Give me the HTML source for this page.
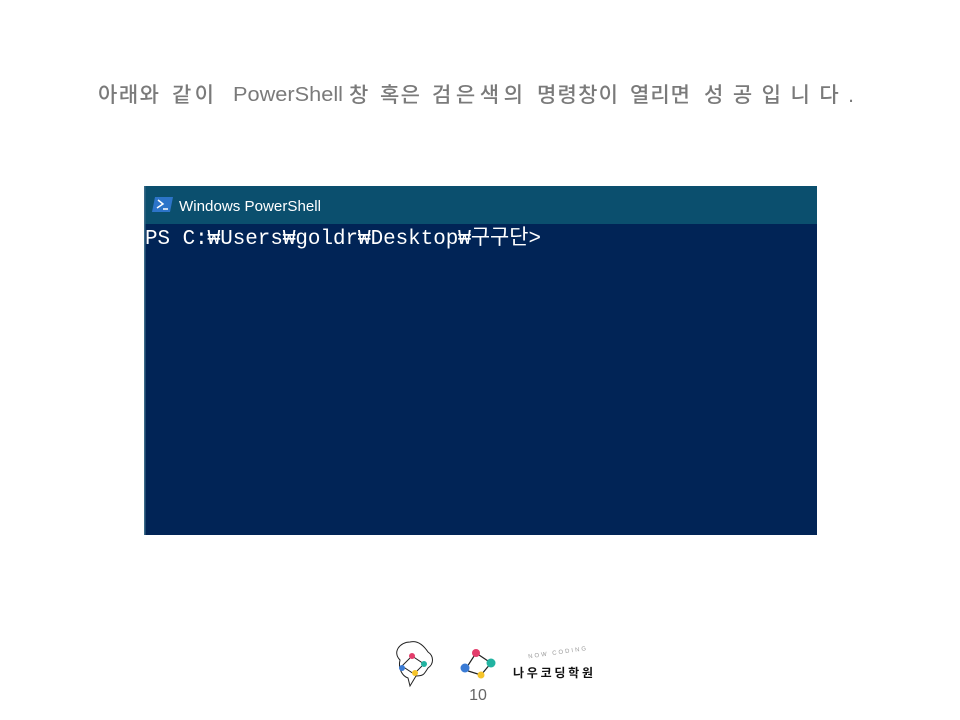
<!DOCTYPE html>
<html><head><meta charset="utf-8"><style>
body{margin:0;width:960px;height:720px;background:#fff;overflow:hidden;position:relative;font-family:"Liberation Sans","Noto Sans CJK KR",sans-serif}
svg{position:absolute;left:0;top:0}
</style></head><body>
<svg width="960" height="720" xmlns="http://www.w3.org/2000/svg">
<g font-size="21" fill="#7a7a7a" font-family="Liberation Sans, Noto Sans CJK KR, sans-serif" font-weight="500">
<text x="98" y="102" textLength="61" lengthAdjust="spacing">아래와</text>
<text x="172" y="102" textLength="42" lengthAdjust="spacing">같이</text>
<text x="233" y="101" font-size="20" textLength="110" lengthAdjust="spacingAndGlyphs">PowerShell</text>
<text x="349" y="102">창</text>
<text x="380" y="102" textLength="40" lengthAdjust="spacing">혹은</text>
<text x="432" y="102" textLength="91" lengthAdjust="spacing">검은색의</text>
<text x="537" y="102" textLength="81" lengthAdjust="spacing">명령창이</text>
<text x="630" y="102" textLength="60" lengthAdjust="spacing">열리면</text>
<text x="704" y="102" textLength="150" lengthAdjust="spacing">성공입니다.</text>
</g>
<rect x="144" y="186" width="673" height="38" fill="#0b4f6e"/>
<rect x="144" y="224" width="673" height="311" fill="#012456"/>
<rect x="144" y="186" width="1.5" height="349" fill="#3a6a88"/>
<path d="M155 197h18l-3 15h-18z" fill="#2c74c9"/>
<path d="M158 200l5 4-6 4M163 209h5" stroke="#fff" stroke-width="1.5" fill="none"/>
<text x="179" y="211" font-size="14.5" fill="#fff" font-family="Liberation Sans, sans-serif" textLength="142" lengthAdjust="spacingAndGlyphs">Windows PowerShell</text>
<text x="145" y="244" font-size="21" fill="#fff" font-family="Liberation Mono, Noto Sans CJK KR, monospace" textLength="396" lengthAdjust="spacingAndGlyphs">PS C:₩Users₩goldr₩Desktop₩구구단&gt;</text>
<path d="M400 660c-8-8 0-18 10-18 8-2 14 4 18 10 6 4 6 12 0 16-4 6-4 8-12 8l-6 10-2-8c-6-2-10-10-8-18z" fill="none" stroke="#222" stroke-width="1"/>
<path d="M402 666l10-10 12 8-10 10z" fill="none" stroke="#222" stroke-width="1"/>
<circle cx="412" cy="656" r="3" fill="#e33d6b"/><circle cx="424" cy="664" r="3" fill="#22b3a1"/><circle cx="402" cy="668" r="3" fill="#3a7bd5"/><circle cx="415" cy="673" r="3" fill="#f6c42a"/>
<path d="M476 653l15 10-10 12-16-5z" fill="none" stroke="#222" stroke-width="1.2"/>
<circle cx="476" cy="653" r="4" fill="#e33d6b"/><circle cx="491" cy="663" r="4.5" fill="#22b3a1"/><circle cx="465" cy="668" r="4.5" fill="#3a7bd5"/><circle cx="481" cy="675" r="3.5" fill="#f6c42a"/>
<text x="478" y="700" font-size="16" fill="#666" text-anchor="middle" font-family="Liberation Sans, sans-serif">10</text>
<text x="528" y="656" font-size="6" fill="#999" letter-spacing="2" font-family="Liberation Sans, sans-serif" transform="rotate(-8 545 654)">NOW CODING</text>
<text x="513" y="677" font-size="12" fill="#111" font-weight="bold" textLength="80" lengthAdjust="spacing" font-family="Noto Sans CJK KR, sans-serif">나우코딩학원</text>
</svg>
</body></html>
